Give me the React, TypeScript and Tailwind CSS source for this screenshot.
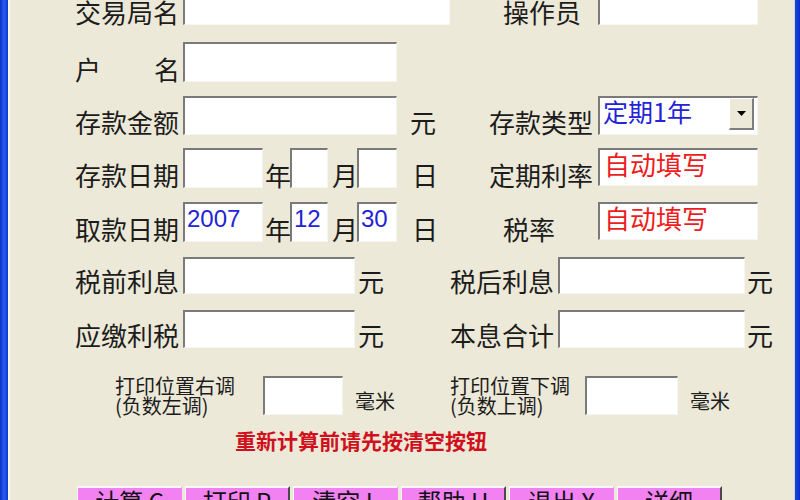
import type { ReactNode } from "react";

const sunken =
  "bg-white border-solid border-t-2 border-l-2 border-b border-r border-t-[#7a7a7a] border-l-[#7a7a7a] border-b-[#f6f5f0] border-r-[#f6f5f0]";

function Label({ className = "", children }: { className?: string; children: ReactNode }) {
  return <div className={`text-[26px] leading-none text-[#1c1c1c] whitespace-nowrap ${className}`}>{children}</div>;
}

function Box({ className = "", children }: { className?: string; children?: ReactNode }) {
  return <div className={`${sunken} ${className}`}>{children}</div>;
}

function SmallLabel({ top, bottom }: { top: string; bottom: string }) {
  return (
    <div className="flex w-[120px] flex-col text-[20px] leading-[20px] text-[#1c1c1c]">
      <span>{top}</span>
      <span>{bottom}</span>
    </div>
  );
}

const buttons = [
  { text: "计算 C", dark: false },
  { text: "打印 P", dark: true },
  { text: "清空 L", dark: false },
  { text: "帮助 H", dark: true },
  { text: "退出 X", dark: false },
  { text: "详细", dark: true },
];

export default function App() {
  return (
    <div className="flex h-[500px] w-[800px] overflow-hidden bg-[#ece9d8] font-['Noto_Sans_CJK_SC',sans-serif]">
      <div className="w-[8px] shrink-0 bg-gradient-to-r from-[#0a2ec8] via-[#2a5cf0] to-[#0b34d4]" />
      <div className="w-[2px] shrink-0 bg-[#f6f5ef]" />

      <div className="flex-1 pl-[65px]">
        {/* 交易局名 / 操作员 */}
        <div className="-mt-[15px] flex h-[40px] items-end">
          <div className="flex h-full w-[414px] items-end">
            <Label className="w-[108px]">交易局名</Label>
            <Box className="h-full w-[267px]" />
          </div>
          <div className="flex h-full items-end">
            <Label className="w-[109px] pl-[14px]">操作员</Label>
            <Box className="h-full w-[160px]" />
          </div>
        </div>

        {/* 户名 */}
        <div className="mt-[17px] flex h-[40px] items-end">
          <Label className="mr-[3px] flex w-[105px] justify-between">
            <span>户</span>
            <span>名</span>
          </Label>
          <Box className="h-full w-[214px]" />
        </div>

        {/* 存款金额 / 存款类型 */}
        <div className="mt-[14px] flex h-[39px] items-end">
          <div className="flex h-full w-[414px] items-end">
            <Label className="w-[108px]">存款金额</Label>
            <Box className="h-full w-[214px]" />
            <Label className="ml-[13px]">元</Label>
          </div>
          <div className="flex h-full items-end">
            <Label className="w-[109px]">存款类型</Label>
            <Box className="flex h-full w-[160px] items-start justify-between">
              <span className="pl-[3px] pt-[1px] text-[25px] leading-none text-[#2323d8]">定期1年</span>
              <div className="mr-[3px] flex h-[32px] w-[25px] items-center justify-center border-solid border-t border-l border-r-2 border-b-2 border-t-white border-l-white border-r-[#7d7d7d] border-b-[#7d7d7d] bg-[#ece9d8]">
                <svg width="9" height="5" viewBox="0 0 9 5">
                  <polygon points="0,0 9,0 4.5,5" fill="#000" />
                </svg>
              </div>
            </Box>
          </div>
        </div>

        {/* 存款日期 / 定期利率 */}
        <div className="mt-[13px] flex h-[40px] items-end">
          <div className="flex h-full w-[414px] items-end">
            <Label className="w-[108px]">存款日期</Label>
            <Box className="h-full w-[80px]" />
            <Label className="w-[27px] pl-[2px]">年</Label>
            <Box className="h-full w-[38px]" />
            <Label className="w-[29px] pl-[4px]">月</Label>
            <Box className="h-full w-[40px]" />
            <Label className="ml-[15px]">日</Label>
          </div>
          <div className="flex h-full items-end">
            <Label className="w-[109px]">定期利率</Label>
            <Box className="h-[38px] w-[160px] self-start">
              <span className="block pl-[4px] pt-[1px] text-[26px] leading-none text-[#ee1c1c]">自动填写</span>
            </Box>
          </div>
        </div>

        {/* 取款日期 / 税率 */}
        <div className="mt-[14px] flex h-[40px] items-end">
          <div className="flex h-full w-[414px] items-end">
            <Label className="w-[108px]">取款日期</Label>
            <Box className="h-full w-[80px]">
              <span className="block pl-[2px] pt-[3px] font-['Liberation_Sans',sans-serif] text-[24px] leading-none text-[#2323d8]">2007</span>
            </Box>
            <Label className="w-[27px] pl-[2px]">年</Label>
            <Box className="h-full w-[38px]">
              <span className="block pl-[2px] pt-[3px] font-['Liberation_Sans',sans-serif] text-[24px] leading-none text-[#2323d8]">12</span>
            </Box>
            <Label className="w-[29px] pl-[4px]">月</Label>
            <Box className="h-full w-[40px]">
              <span className="block pl-[2px] pt-[3px] font-['Liberation_Sans',sans-serif] text-[24px] leading-none text-[#2323d8]">30</span>
            </Box>
            <Label className="ml-[15px]">日</Label>
          </div>
          <div className="flex h-full items-end">
            <Label className="w-[109px] pl-[14px]">税率</Label>
            <Box className="h-[38px] w-[160px] self-start">
              <span className="block pl-[4px] pt-[1px] text-[26px] leading-none text-[#ee1c1c]">自动填写</span>
            </Box>
          </div>
        </div>

        {/* 税前利息 / 税后利息 */}
        <div className="mt-[15px] flex h-[37px] items-end">
          <div className="flex h-full w-[375px] items-end">
            <Label className="w-[108px]">税前利息</Label>
            <Box className="h-full w-[172px]" />
            <Label className="ml-[3px]">元</Label>
          </div>
          <div className="flex h-full items-end">
            <Label className="w-[108px]">税后利息</Label>
            <Box className="h-full w-[187px]" />
            <Label className="ml-[2px]">元</Label>
          </div>
        </div>

        {/* 应缴利税 / 本息合计 */}
        <div className="mt-[16px] flex h-[38px] items-end">
          <div className="flex h-full w-[375px] items-end">
            <Label className="w-[108px]">应缴利税</Label>
            <Box className="h-full w-[172px]" />
            <Label className="ml-[3px]">元</Label>
          </div>
          <div className="flex h-full items-end">
            <Label className="w-[108px]">本息合计</Label>
            <Box className="h-full w-[187px]" />
            <Label className="ml-[2px]">元</Label>
          </div>
        </div>

        {/* 打印位置 */}
        <div className="mt-[28px] flex h-[39px] items-center">
          <div className="flex h-full w-[375px] items-center pl-[40px]">
            <SmallLabel top="打印位置右调" bottom="(负数左调)" />
            <Box className="ml-[28px] h-full w-[80px]" />
            <span className="ml-[12px] mt-[10px] text-[20px] leading-none text-[#1c1c1c]">毫米</span>
          </div>
          <div className="flex h-full items-center">
            <SmallLabel top="打印位置下调" bottom="(负数上调)" />
            <Box className="ml-[15px] h-full w-[93px]" />
            <span className="ml-[12px] mt-[10px] text-[20px] leading-none text-[#1c1c1c]">毫米</span>
          </div>
        </div>

        <div className="mt-[15px] pl-[160px] text-[21px] font-bold leading-none text-[#d0101c]">
          重新计算前请先按清空按钮
        </div>

        <div className="mt-[35px] flex gap-[3px] pl-[2px]">
          {buttons.map((b) => (
            <div
              key={b.text}
              className={
                b.dark
                  ? "h-[34px] w-[105px] border-solid border-t-2 border-l border-r-2 border-t-[#fbf6fb] border-l-[#fbf6fb] border-r-[#4a4a4a] bg-[#f282f2] pt-[1px] text-center text-[24px] leading-none text-[#111]"
                  : "h-[34px] w-[105px] border-solid border-t-2 border-l border-r border-t-[#fbf6fb] border-l-[#fbf6fb] border-r-[#f282f2] bg-[#f282f2] pt-[1px] text-center text-[24px] leading-none text-[#111]"
              }
            >
              {b.text}
            </div>
          ))}
        </div>
      </div>

      <div className="w-[1px] shrink-0 bg-[#d6d3c2]" />
      <div className="w-[5px] shrink-0 bg-gradient-to-r from-[#1747e6] to-[#0a2ec8]" />
    </div>
  );
}
